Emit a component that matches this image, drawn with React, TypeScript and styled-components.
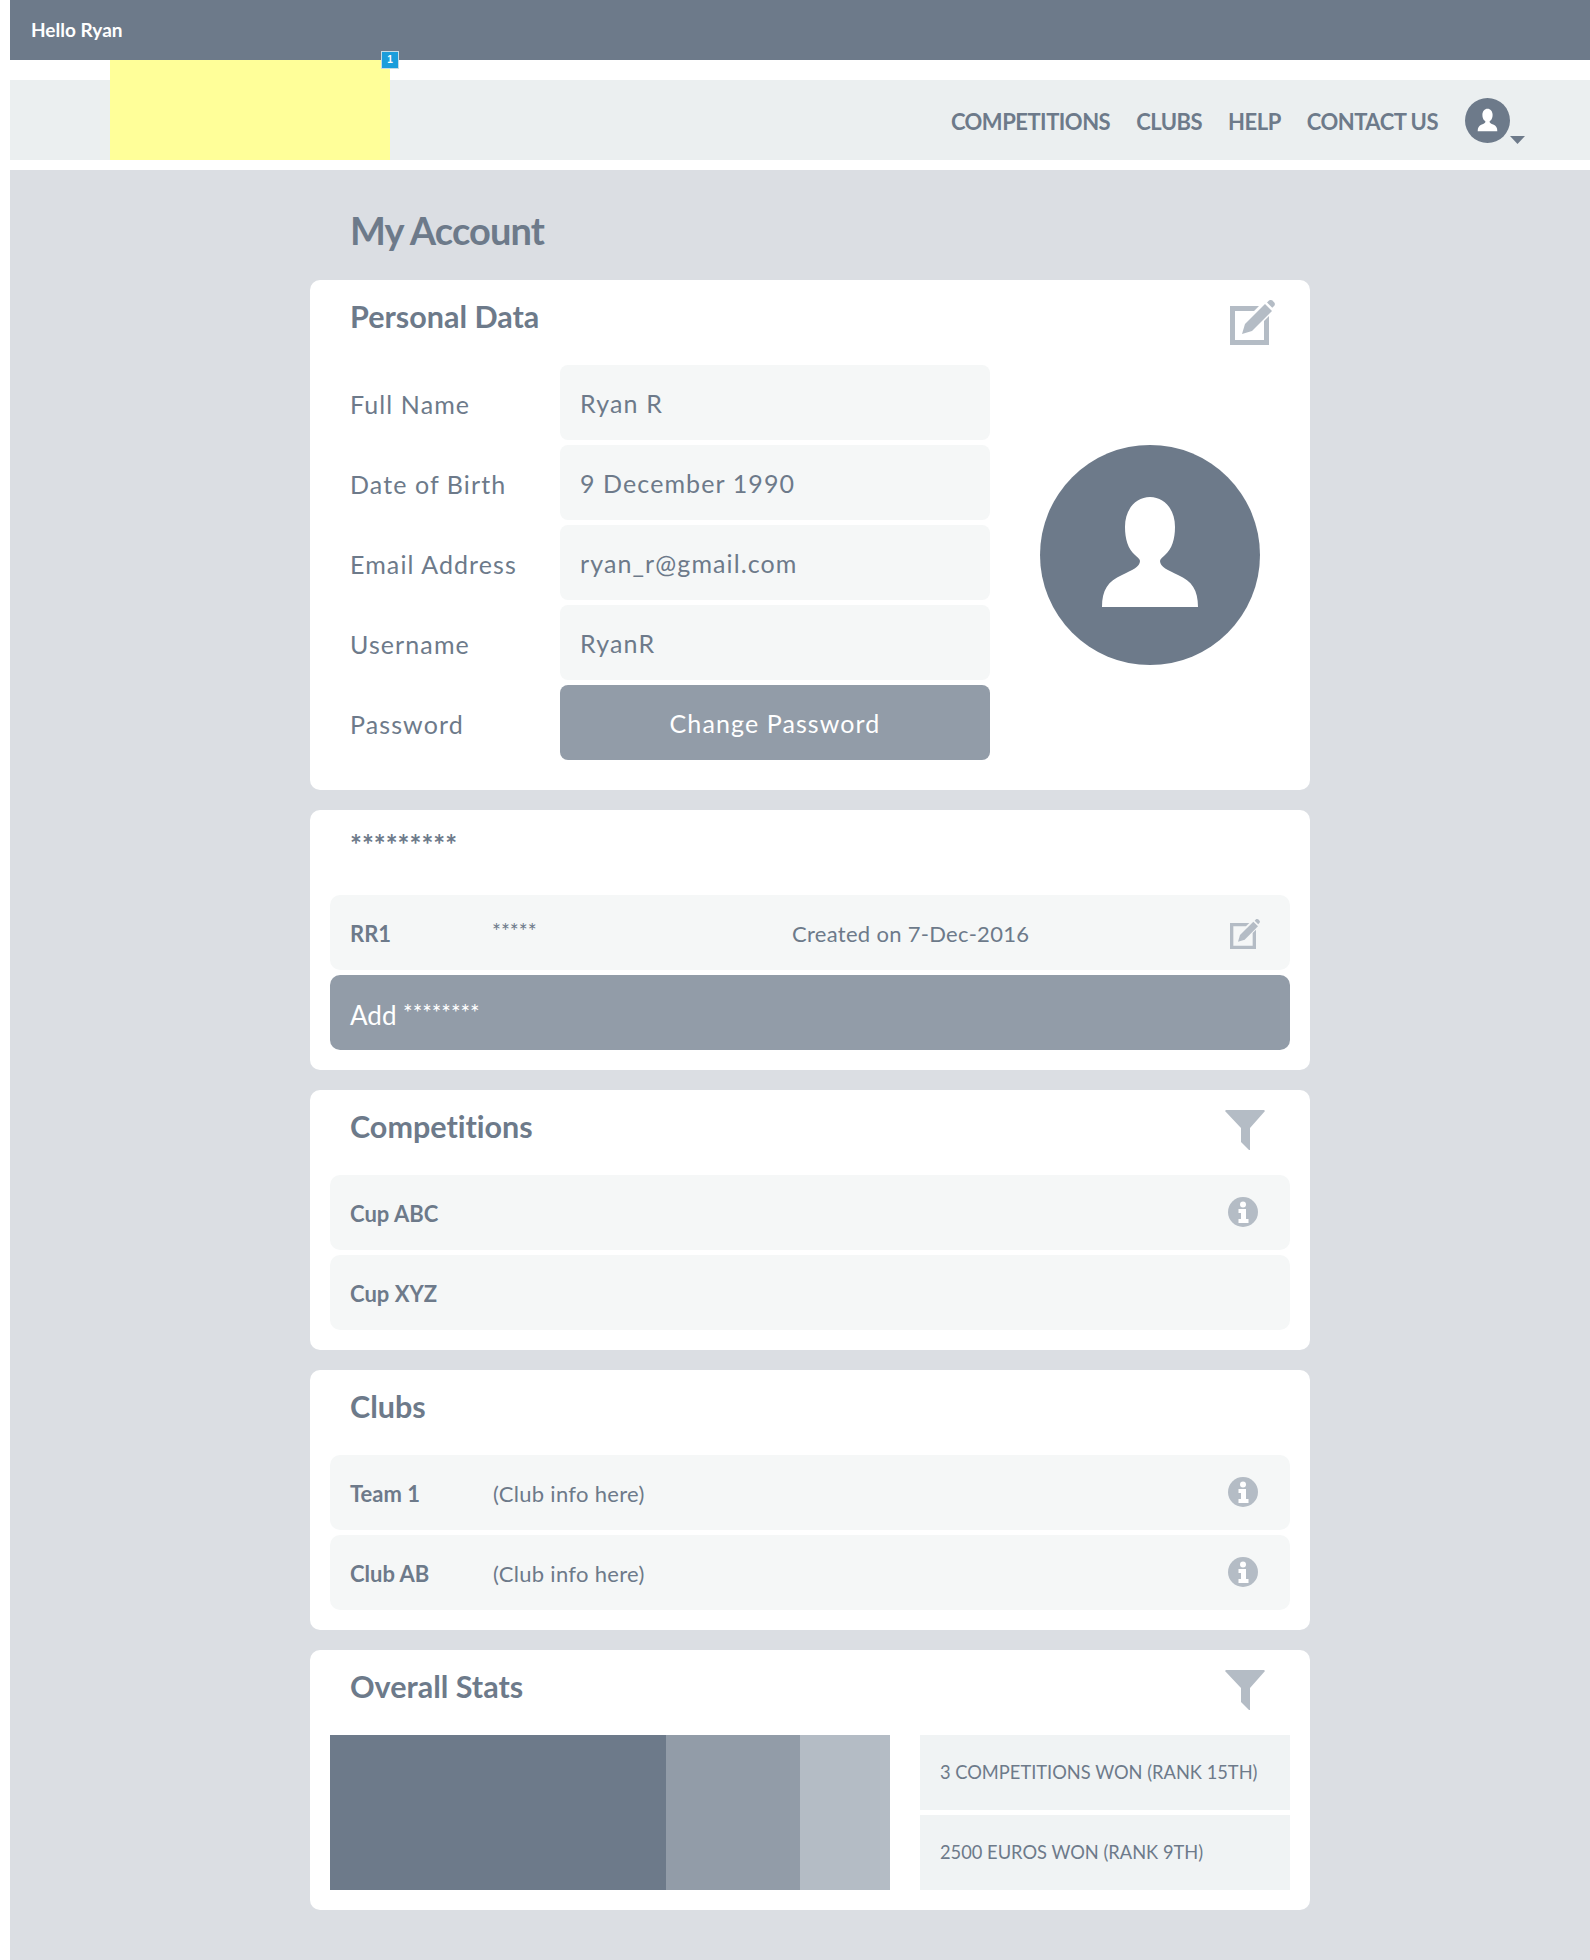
import React from "react";
import styled, { createGlobalStyle } from "styled-components";

const GlobalStyle = createGlobalStyle`
  html, body {
    margin: 0;
    padding: 0;
    background: #ffffff;
    overflow-x: hidden;
  }
  body {
    font-family: "Lato", "Noto Sans", sans-serif;
    font-variant-ligatures: none;
    color: #6d7a8a;
  }
`;

const Page = styled.div`
  width: 1600px;
  margin-left: 10px;
`;

const TopBar = styled.div`
  height: 60px;
  background: #6d7a8a;
  color: #ffffff;
  font-size: 19px;
  font-weight: 700;
  line-height: 60px;
  padding-left: 21px;
`;

const NavBar = styled.div`
  height: 80px;
  margin-top: 20px;
  background: #ebeff0;
  display: flex;
  align-items: flex-start;
  padding-right: 85px;
`;

const Logo = styled.div`
  position: relative;
  width: 280px;
  height: 100px;
  margin: -20px 0 0 100px;
  background: #ffff99;
`;

const Badge = styled.span`
  position: absolute;
  top: -9px;
  right: -9px;
  width: 18px;
  height: 18px;
  box-sizing: border-box;
  background: #1b9ddb;
  border: 1px solid #c6dbe6;
  color: #ffffff;
  font-family: "Liberation Sans", sans-serif;
  font-size: 10px;
  font-weight: 700;
  line-height: 16px;
  text-align: center;
`;

const NavLinks = styled.nav`
  margin-left: auto;
  display: flex;
  align-items: center;
  height: 82px;
  gap: 26px;
  font-size: 22px;
  font-weight: 700;
  letter-spacing: -0.5px;
`;

const NavLink = styled.a`
  color: #6d7a8a;
`;

const UserMenu = styled.div`
  display: flex;
  align-items: flex-end;
  margin-top: 18px;
  margin-left: 27px;
`;

const Caret = styled.svg`
  display: block;
  width: 15px;
  height: 8px;
  margin-bottom: -1px;
`;

const Content = styled.main`
  margin-top: 10px;
  background: #dbdee3;
  min-height: 1790px;
  padding-top: 38px;
  box-sizing: border-box;
`;

const Column = styled.div`
  width: 1000px;
  margin: 0 auto;
  display: flex;
  flex-direction: column;
  gap: 20px;
`;

const PageTitle = styled.h1`
  margin: 0 0 4px 40px;
  height: 48px;
  font-size: 38px;
  line-height: 44px;
  font-weight: 700;
  letter-spacing: -0.9px;
`;

const Card = styled.section`
  background: #ffffff;
  border-radius: 10px;
  padding-bottom: 20px;
`;

const CardHeader = styled.header`
  height: 85px;
  box-sizing: border-box;
  padding: 20px 0 0 40px;
  display: flex;
  justify-content: space-between;
  align-items: flex-start;
`;

const CardTitle = styled.h2`
  margin: 0;
  font-size: 30.5px;
  line-height: 32px;
  font-weight: 700;
`;

const Masked = styled.span`
  font-size: 28px;
  font-weight: 700;
  line-height: 29px;
`;

const ActionIcon = styled.svg<{ $right: number }>`
  display: block;
  margin-right: ${(p) => p.$right}px;
  fill: #b4bcc5;
`;

const PersonalBody = styled.div`
  display: flex;
  padding: 0 0 10px 40px;
`;

const Form = styled.div`
  display: grid;
  grid-template-columns: 210px 430px;
  grid-auto-rows: 75px;
  row-gap: 5px;
  align-items: center;
`;

const Label = styled.label`
  font-size: 25px;
  letter-spacing: 1.1px;
  padding-top: 2px;
`;

const Field = styled.div`
  height: 75px;
  box-sizing: border-box;
  padding-left: 20px;
  background: #f5f7f7;
  border-radius: 8px;
  font-size: 25px;
  letter-spacing: 1.1px;
  line-height: 77px;
`;

const PasswordButton = styled.button`
  height: 75px;
  border: none;
  border-radius: 8px;
  background: #929ca8;
  color: #ffffff;
  font-family: inherit;
  font-size: 25px;
  letter-spacing: 1.1px;
`;

const Avatar = styled.svg`
  display: block;
  width: 220px;
  height: 220px;
  margin: 80px 0 0 50px;
`;

const Rows = styled.div`
  display: flex;
  flex-direction: column;
  gap: 5px;
  padding: 0 20px;
`;

const Row = styled.div`
  height: 75px;
  box-sizing: border-box;
  padding: 2px 30px 0 20px;
  background: #f5f7f7;
  border-radius: 10px;
  display: grid;
  grid-template-columns: 143px 299px 1fr auto;
  align-items: center;
  font-size: 22px;
`;

const RowName = styled.span`
  font-weight: 700;
`;

const RowInfo = styled.span`
  letter-spacing: 0.3px;
`;

const StarsSmall = styled.span`
  font-size: 21px;
  position: relative;
  top: -3px;
  left: -1px;
`;

const AddRow = styled.div`
  height: 75px;
  box-sizing: border-box;
  padding-left: 20px;
  background: #929ca8;
  border-radius: 10px;
  color: #ffffff;
  font-size: 26px;
  line-height: 80px;
`;

const AddStars = styled.span`
  font-size: 22.5px;
  position: relative;
  top: -4px;
`;

const StatsBody = styled.div`
  display: flex;
  padding: 0 20px;
  gap: 30px;
`;

const Chart = styled.div`
  width: 560px;
  height: 155px;
  display: flex;
`;

const ChartBar = styled.div<{ $color: string; $width: number }>`
  width: ${(p) => p.$width}px;
  background: ${(p) => p.$color};
`;

const StatList = styled.div`
  flex: 1;
  display: flex;
  flex-direction: column;
  gap: 5px;
`;

const Stat = styled.div`
  height: 75px;
  box-sizing: border-box;
  padding-left: 20px;
  background: #f0f3f4;
  font-size: 18.3px;
  line-height: 75px;
`;

const InfoSvg = styled.svg`
  display: block;
  margin: -3px 2px 0 0;
`;

const EditIcon = ({ size, right }: { size: number; right: number }) => (
  <ActionIcon $right={right} width={size} height={size} viewBox="0 0 45 45">
    <path d="M0 6h29l-5 5H5v29h29V21l5-5v29H0z" />
    <path d="M12 34l3-10L35 4l7 7-20 20z" />
    <path d="M37 2.5l2-2c1-.8 2.4-.7 3.300 0l2 2c.8 1 .8 2.400 0 3.300l-2 2z" />
  </ActionIcon>
);

const FilterIcon = () => (
  <ActionIcon $right={45} width={40} height={40} viewBox="0 0 40 40">
    <path d="M0 1l1-1h38l1 1-15 17v22l-1 0-8-8V18z" />
  </ActionIcon>
);

const InfoIcon = () => (
  <InfoSvg width={30} height={30} viewBox="0 0 30 30">
    <circle cx="15" cy="15" r="15" fill="#b4bcc5" />
    <circle cx="15" cy="7.500" r="3" fill="#ffffff" />
    <path d="M10.500 12h7.500v10h2.500v4h-10v-4h2.500v-6h-2.500z" fill="#ffffff" />
  </InfoSvg>
);

const PERSON =
  "M62 162C62 145 68 136 82 130C92 125 100 122 100 116C100 114 97 112 95 110C88 104 85 94 85 82C85 64 96 52 110 52C124 52 135 64 135 82C135 94 132 104 125 110C123 112 120 114 120 116C120 122 128 125 138 130C152 136 158 145 158 162Z";

const PersonCircle = () => (
  <>
    <circle cx="110" cy="110" r="110" fill="#6d7a8a" />
    <path d={PERSON} fill="#ffffff" />
  </>
);

const fields = [
  ["Full Name", "Ryan R"],
  ["Date of Birth", "9 December 1990"],
  ["Email Address", "ryan_r@gmail.com"],
  ["Username", "RyanR"],
];

const App = () => {
  return (
    <Page>
      <GlobalStyle />
      <TopBar>Hello Ryan</TopBar>
      <NavBar>
        <Logo>
          <Badge>1</Badge>
        </Logo>
        <NavLinks>
          <NavLink>COMPETITIONS</NavLink>
          <NavLink>CLUBS</NavLink>
          <NavLink>HELP</NavLink>
          <NavLink>CONTACT US</NavLink>
        </NavLinks>
        <UserMenu>
          <svg width={45} height={45} viewBox="0 0 220 220">
            <PersonCircle />
          </svg>
          <Caret viewBox="0 0 15 8">
            <path d="M0 0h15L7.500 8z" fill="#6d7a8a" />
          </Caret>
        </UserMenu>
      </NavBar>
      <Content>
        <Column>
          <PageTitle>My Account</PageTitle>
          <Card>
            <CardHeader>
              <CardTitle>Personal Data</CardTitle>
              <EditIcon size={45} right={35} />
            </CardHeader>
            <PersonalBody>
              <Form>
                {fields.map(([label, value]) => (
                  <React.Fragment key={label}>
                    <Label>{label}</Label>
                    <Field>{value}</Field>
                  </React.Fragment>
                ))}
                <Label>Password</Label>
                <PasswordButton>Change Password</PasswordButton>
              </Form>
              <Avatar viewBox="0 0 220 220">
                <PersonCircle />
              </Avatar>
            </PersonalBody>
          </Card>
          <Card>
            <CardHeader>
              <Masked>*********</Masked>
            </CardHeader>
            <Rows>
              <Row>
                <RowName>RR1</RowName>
                <StarsSmall>*****</StarsSmall>
                <RowInfo>Created on 7-Dec-2016</RowInfo>
                <EditIcon size={30} right={0} />
              </Row>
              <AddRow>
                Add <AddStars>********</AddStars>
              </AddRow>
            </Rows>
          </Card>
          <Card>
            <CardHeader>
              <CardTitle>Competitions</CardTitle>
              <FilterIcon />
            </CardHeader>
            <Rows>
              <Row>
                <RowName>Cup ABC</RowName>
                <span />
                <span />
                <InfoIcon />
              </Row>
              <Row>
                <RowName>Cup XYZ</RowName>
              </Row>
            </Rows>
          </Card>
          <Card>
            <CardHeader>
              <CardTitle>Clubs</CardTitle>
            </CardHeader>
            <Rows>
              <Row>
                <RowName>Team 1</RowName>
                <RowInfo>(Club info here)</RowInfo>
                <span />
                <InfoIcon />
              </Row>
              <Row>
                <RowName>Club AB</RowName>
                <RowInfo>(Club info here)</RowInfo>
                <span />
                <InfoIcon />
              </Row>
            </Rows>
          </Card>
          <Card>
            <CardHeader>
              <CardTitle>Overall Stats</CardTitle>
              <FilterIcon />
            </CardHeader>
            <StatsBody>
              <Chart>
                <ChartBar $color="#6d7a8a" $width={336} />
                <ChartBar $color="#929ca8" $width={134} />
                <ChartBar $color="#b4bcc5" $width={90} />
              </Chart>
              <StatList>
                <Stat>3 COMPETITIONS WON (RANK 15TH)</Stat>
                <Stat>2500 EUROS WON (RANK 9TH)</Stat>
              </StatList>
            </StatsBody>
          </Card>
        </Column>
      </Content>
    </Page>
  );
};

export default App;
